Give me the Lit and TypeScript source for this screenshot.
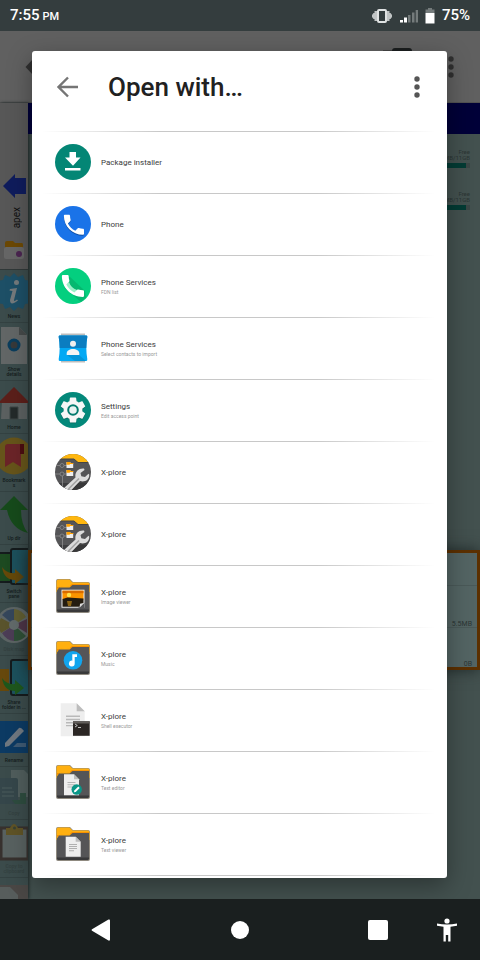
import { LitElement, html, css, svg, nothing } from "lit";
import type { SVGTemplateResult } from "lit";
import { customElement } from "lit/decorators.js";

const HANDSET =
  "M6.62 10.79c1.44 2.83 3.76 5.14 6.59 6.59l2.2-2.2c.27-.27.67-.36 1.02-.24 1.12.37 2.33.57 3.57.57.55 0 1 .45 1 1V20c0 .55-.45 1-1 1-9.39 0-17-7.61-17-17 0-.55.45-1 1-1h3.5c.55 0 1 .45 1 1 0 1.25.2 2.45.57 3.57.11.35.03.74-.25 1.02l-2.2 2.2z";
const GEAR =
  "M19.43 12.98c.04-.32.07-.64.07-.98s-.03-.66-.07-.98l2.11-1.65c.19-.15.24-.42.12-.64l-2-3.46c-.12-.22-.39-.3-.61-.22l-2.49 1c-.52-.4-1.08-.73-1.69-.98l-.38-2.65C14.46 2.18 14.25 2 14 2h-4c-.25 0-.46.18-.49.42l-.38 2.65c-.61.25-1.17.59-1.69.98l-2.49-1c-.23-.09-.49 0-.61.22l-2 3.46c-.13.22-.07.49.12.64l2.11 1.65c-.04.32-.07.65-.07.98s.03.66.07.98l-2.11 1.65c-.19.15-.24.42-.12.64l2 3.46c.12.22.39.3.61.22l2.49-1c.52.4 1.08.73 1.69.98l.38 2.65c.03.24.24.42.49.42h4c.25 0 .46-.18.49-.42l.38-2.65c.61-.25 1.17-.59 1.69-.98l2.49 1c.23.09.49 0 .61-.22l2-3.46c.12-.22.07-.49-.12-.64l-2.11-1.65z";

const folder = (inner: SVGTemplateResult) => svg`
  <path d="M3 1h12l3 3h15q2 0 2 2v27q0 2-2 2H3q-2 0-2-2V3q0-2 2-2z" fill="#8f8a80"/>
  <path d="M3.500 1.500h11l3 3h15.500q1.500 0 1.500 1.500v8h-33V3.500q0-2 2-2z" fill="#ffb010"/>
  <path d="M2 9V11l4-2.500h8l3-2.500h17V7z" fill="#f79000"/>
  <path d="M2 12.500L4 9.500h10.500L17.500 7H34v25q0 2-2 2H4q-2 0-2-2z" fill="#555557"/>
  <path d="M2 31.500h32v1q0 1.500-2 1.500H4q-2 0-2-1.500z" fill="#39393a"/>
  ${inner}`;

const sheet = (x: number, y: number, w: number, h: number, f: number) => svg`
  <path d="M${x} ${y}h${w - f}l${f} ${f}v${h - f}h${-w}z" fill="#eeeeee"/>
  <path d="M${x + w - f} ${y}l${f} ${f}h${-f}z" fill="#bdbdbd"/>`;

const xplore = svg`
  <clipPath id="disc"><circle cx="18" cy="18" r="18"/></clipPath>
  <g clip-path="url(#disc)">
    <rect width="36" height="36" fill="#555557"/>
    <path d="M0 0h36v8.500H23L19 5H0z" fill="#ffb70f"/>
    <path d="M0 5h19l4 3.500h13" fill="none" stroke="#444" stroke-width="1"/>
    <path d="M0 29h36v7H0z" fill="#3d3d3f"/>
    <g fill="none" stroke="#8d8d8d" stroke-width=".8"><path d="M0 11.500h12M0 20h12M7.500 22v12"/><circle cx="7" cy="11.500" r="2" fill="#555557"/><circle cx="7" cy="20" r="2" fill="#555557"/></g>
    <path d="M11.500 8h3.500l.8 1h2.400v5h-6.700z" fill="#eee"/><path d="M11.500 8h3.500l.8 1h2.400v1h-3l-.7.700h-3z" fill="#ffa000"/>
    <path d="M11.500 16h3.500l.8 1h2.400v5h-6.700z" fill="#eee"/><path d="M11.500 16h3.500l.8 1h2.400v1h-3l-.7.700h-3z" fill="#ffa000"/>
    <path d="M13 36L26 26l6 1 4-5v14z" fill="#333" opacity=".5"/>
    <path d="M9 34L20.500 23.500C19.500 18 23.500 13.800 29 14.500l.5 1.500-4 3 .8 3.200 3.700.8 3.500-3.300.7.800C34.500 25.500 30 28.500 25 27L15.500 37H10z" fill="#dcdcdc"/>
    <path d="M13.500 35L24 24.500" stroke="#a4a4a4" stroke-width="1.600" fill="none"/>
  </g>`;

const icons: Record<string, SVGTemplateResult> = {
  installer: svg`<circle cx="18" cy="18" r="18" fill="#048675"/>
    <path d="M14.500 8h6.500v5.500h4.500L18 21.700 10 13.500h4.500zM10 24h15.500v2.400H10z" fill="#fff"/>`,
  phone: svg`<circle cx="18" cy="18" r="18" fill="#1a73e8"/>
    <path d="${HANDSET}" transform="translate(5.500 6.200) scale(1.120)" fill="#0d4ea6"/>
    <path d="${HANDSET}" transform="translate(5.500 5.300) scale(1.120)" fill="#fff"/>`,
  services: svg`<circle cx="18" cy="18" r="18" fill="#04cf7f"/>
    <path d="M14.500 8.500L30 23l1 6.500L26 34 9.500 20z" fill="#05b870"/>
    <path d="M9 17l5-3q2 6 8 8l-2 5q-8-3-11-10z" fill="#9df0c9"/>
    <path d="${HANDSET}" transform="translate(3.200 3.200) scale(1.230)" fill="#fff"/>`,
  contacts: svg`<path d="M6 3.500h24v29H6z" fill="#bdbdbd"/>
    <path d="M4.500 5.500h27q1 0 .8 1.500c-1.300 7-1.300 15 0 22q.2 2-1 2H4.700q-1.200 0-1-2c1.300-7 1.300-15 0-22q-.2-1.500.8-1.500z" fill="#03a9f4"/>
    <path d="M4.500 5.500h27q1 0 .8 1.500-1 5-1 11H4.700q0-6-1-11-.2-1.500.8-1.500z" fill="#0b7dc0"/>
    <path d="M20 31l-8-6h12l7 6z" fill="#0395d8"/>
    <circle cx="18" cy="13.700" r="3" fill="#eee"/><path d="M11.700 25v-1.500c0-3 3-4.500 6.300-4.500s6.300 1.500 6.300 4.500V25z" fill="#f4f4f4"/>`,
  settings: svg`<circle cx="18" cy="18" r="18" fill="#04887a"/>
    <path d="${GEAR}" transform="translate(3 3.800) scale(1.250)" fill="#04665b"/>
    <path d="${GEAR}" transform="translate(3 3) scale(1.250)" fill="#f6f6f6"/>
    <circle cx="18" cy="18" r="4.800" fill="#eaf3f2" stroke="#047a6d" stroke-width="2"/>`,
  xplore,
  image: folder(svg`<rect x="6.500" y="11.700" width="23" height="18" fill="#eee"/>
    <rect x="7.500" y="12.700" width="21" height="9" fill="#fb9400"/><path d="M7.500 12.700h21v2.500h-21z" fill="#d86b00"/>
    <circle cx="14" cy="17" r="2.200" fill="#ffe24a"/>
    <path d="M7.500 21l5-1.500 16 1v8.200h-21z" fill="#241c10"/><path d="M12 23h5l-1 5h-3z" fill="#8c6414"/>
    <path d="M29.500 24.500v6h-7z" fill="#555557"/><path d="M24.500 29.700l.5-4 4.500-1z" fill="#ddd"/>`),
  music: folder(svg`<circle cx="18" cy="20.300" r="9.300" fill="#12a5ee"/>
    <path d="M17.300 14.300h4.700v2.700h-2.300v6.500a2.900 2.900 0 1 1-2.400-2.800z" fill="#fff"/>`),
  shell: svg`${sheet(5.7, 1.3, 24, 33, 8)}
    <path d="M11 13.500h14v1.500H11zM11 16.700h14v1.500H11zM11 20h8v1.500h-8zM11 23h8v1.200h-8z" fill="#b9b9b9"/>
    <rect x="18" y="19.300" width="16.700" height="14.500" fill="#2b2624"/><path d="M18 19.300h16.700v2.200H18z" fill="#625e5b"/>
    <path d="M20 22l2.300 1.500L20 25M23 25.500h3" stroke="#d0d0d0" fill="none" stroke-width=".9"/>`,
  editor: folder(svg`${sheet(9, 10.3, 15, 21, 5)}
    <path d="M12.500 18h8v1h-8zM12.500 20.300h8v1h-8zM12.500 22.600h5v1h-5z" fill="#b5b5b5"/>
    <circle cx="21.700" cy="25.500" r="5.200" fill="#0a9687"/><path d="M19 28.300l.3-1.700 4-4 1.400 1.400-4 4z" fill="#fff"/>`),
  viewer: folder(svg`${sheet(10.7, 10.7, 15, 20, 5)}
    <path d="M14 18h8v1h-8zM14 20h8v1h-8zM14 22h8v1h-8zM14 24.300h5v1h-5z" fill="#b0b0b0"/>`),
};

const apps = [
  { icon: "installer", name: "Package installer" },
  { icon: "phone", name: "Phone" },
  { icon: "services", name: "Phone Services", note: "FDN list" },
  { icon: "contacts", name: "Phone Services", note: "Select contacts to import" },
  { icon: "settings", name: "Settings", note: "Edit access point" },
  { icon: "xplore", name: "X-plore" },
  { icon: "xplore", name: "X-plore" },
  { icon: "image", name: "X-plore", note: "Image viewer" },
  { icon: "music", name: "X-plore", note: "Music" },
  { icon: "shell", name: "X-plore", note: "Shell executor" },
  { icon: "editor", name: "X-plore", note: "Text editor" },
  { icon: "viewer", name: "X-plore", note: "Text viewer" },
];

const tools: { label: string[]; faint?: boolean; art: SVGTemplateResult }[] = [
  {
    label: ["News"],
    art: svg`<path d="M14 0l4 4 5-2 2 5 6 1-1 6 4 5-4 5 1 6-6 1-2 5-5-2-4 4-4-4-5 2-2-5-6-1 1-6-4-5 4-5-1-6 6-1 2-5 5 2z" fill="#1d4f66"/>
      <circle cx="16.500" cy="9.500" r="2.500" fill="#747a7c"/><path d="M10 16l7-1-3 12q0 2 3-.5l1 1q-8 6-8-.5l2.500-9-3-.5z" fill="#747a7c"/>`,
  },
  {
    label: ["Show", "details"],
    art: svg`<path d="M1 1h18l8 8v29H1z" fill="#626666"/><path d="M19 1l8 8h-8z" fill="#454949"/>
      <circle cx="14" cy="19" r="5" fill="#37393a" stroke="#0b3d5c" stroke-width="3"/>`,
  },
  {
    label: ["Home"],
    art: svg`<path d="M2 16L14 6l13 10v19H1z" fill="#5b6060"/><path d="M10 23h8v12h-8z" fill="#232a2a" stroke="#3d4444"/>
      <path d="M14 3L30 19H-2z" fill="#5b1f1a"/>`,
  },
  {
    label: ["Bookmark", "s"],
    art: svg`<circle cx="14" cy="19" r="18.500" fill="#66541a"/><path d="M5 10q0-3 3-3h16v8h-3v15l-8-5-8 5z" fill="#6b2428"/><path d="M20 7h4v10h-4z" fill="#4b0d11"/>`,
  },
  { label: ["Up dir"], art: svg`<path d="M14 1L28 15h-7q0 15 7 23Q11 34 7 15H0z" fill="#164a1b"/>` },
  {
    label: ["Switch", "pane"],
    art: svg`<rect x="-6" y="5" width="17" height="29" fill="#1d4a21" stroke="#151b1d" stroke-width="2"/>
      <rect x="11" y="1" width="22" height="35" rx="2" fill="#1d525e" stroke="#151b1d" stroke-width="2"/>
      <path d="M2 19q5 7 13 6v-4l9 8-9 7v-4Q4 32 2 19z" fill="#66490a"/>`,
  },
  {
    label: ["Disk map"],
    faint: true,
    art: svg`<circle cx="14" cy="19" r="18" fill="#626969"/><path d="M14 19L2 9A16 16 0 0 1 14 3z" fill="#34465e"/><path d="M14 19V3a16 16 0 0 1 12 8z" fill="#67612e"/>
      <path d="M14 19l13-6v14z" fill="#4f3146"/><path d="M14 19l12 11a16 16 0 0 1-12 5z" fill="#2d5033"/><path d="M14 19v16a16 16 0 0 1-12-8z" fill="#503b58"/><path d="M14 19L1 27a16 16 0 0 1 0-15z" fill="#5f5527"/><circle cx="14" cy="19" r="5" fill="#697070"/>`,
  },
  {
    label: ["Share", "folder in ..."],
    art: svg`<path d="M0 10h9v22H0z" fill="#66480c"/><rect x="11" y="1" width="22" height="35" rx="2" fill="#1d525e" stroke="#151b1d" stroke-width="2"/>
      <path d="M2 19q5 7 13 6v-4l9 8-9 7v-4Q4 32 2 19z" fill="#1e571c"/>`,
  },
  {
    label: ["Rename"],
    art: svg`<rect y="4" width="28" height="32" fill="#0c3a63"/><path d="M5 30V26L19 11q2-1 5 3L9 29z" fill="#707880"/><path d="M17 26h9v4H13z" fill="#3f5a73"/>`,
  },
  {
    label: ["Copy"],
    faint: true,
    art: svg`<path d="M11 0h13l5 5v22H11z" fill="#546160"/><rect x="-3" y="8" width="21" height="26" rx="2" fill="#35464a"/><path d="M2 18h10M2 22h12M2 26h12" stroke="#4d5c5f" fill="none"/><path d="M12 30h8v-7h6v11H15z" fill="#2c4d3e"/>`,
  },
  {
    label: ["Copy to", "clipboard"],
    faint: true,
    art: svg`<rect x="1" y="5" width="27" height="31" fill="#5e6564" stroke="#372d29" stroke-width="3"/><path d="M6 12V5h4q4-8 8 0h5v7z" fill="#665520"/><circle cx="14.500" cy="5" r="1.500" fill="#38402f"/>`,
  },
  {
    label: [],
    faint: true,
    art: svg`<rect x="-1" y="4" width="30" height="36" fill="#4d4744"/><path d="M0 6h10l8 8v24H0z" fill="#5c6160"/>`,
  },
];

const dots = svg`<circle cx="12" cy="4" r="2.700"/><circle cx="12" cy="12" r="2.700"/><circle cx="12" cy="20" r="2.700"/>`;

@customElement("app-root")
export class AppRoot extends LitElement {
  static styles = css`
    :host {
      display: flex;
      flex-direction: column;
      height: 100vh;
      font-family: Roboto, "Liberation Sans", sans-serif;
      background: #43514f;
      overflow: hidden;
    }
    * { box-sizing: border-box; }
    button {
      border: 0;
      padding: 0;
      margin: 0;
      background: none;
      font: inherit;
      color: inherit;
      display: flex;
      align-items: center;
      justify-content: center;
    }
    svg { display: block; flex: none; }
    ul { list-style: none; margin: 0; padding: 0; }

    .status {
      flex: none;
      height: 31px;
      padding: 0 10px;
      display: flex;
      align-items: center;
      justify-content: space-between;
      background: #343d3e;
      color: #fff;
      font-size: 15px;
      font-weight: 500;
      line-height: 31px;
    }
    .clock { display: flex; align-items: baseline; gap: 3px; }
    .clock small { font-size: 11px; }
    .signals { display: flex; align-items: center; gap: 7px; }

    .stage {
      flex: 1;
      min-height: 0;
      position: relative;
      display: flex;
      flex-direction: column;
      overflow: hidden;
    }
    .toolbar {
      flex: none;
      height: 72px;
      display: flex;
      align-items: center;
      gap: 26px;
      padding: 0 17px 0 24px;
      background: #606060;
      border-bottom: 1px solid #525252;
      fill: #303030;
    }
    .toolbar .device { margin-left: auto; align-self: flex-start; margin-top: 17px; }
    .toolbar button { width: 24px; height: 24px; }
    .panes { flex: 1; min-height: 0; display: flex; }
    .side {
      flex: none;
      width: 28px;
      overflow: hidden;
      background: #3b4b4b;
      box-shadow: 1px 0 3px #1e2828;
    }
    .tab {
      height: 167px;
      padding-bottom: 10px;
      display: flex;
      flex-direction: column;
      align-items: center;
      justify-content: flex-end;
      gap: 9px;
      background: #575757;
      border-bottom: 1px solid #303838;
      font-size: 10px;
      color: #101010;
    }
    .tab span { writing-mode: vertical-rl; transform: rotate(180deg); line-height: 12px; margin: 0 0 4px 6px; }
    .tool {
      width: 28px;
      padding: 3px 0;
      flex-direction: column;
      gap: 3px;
      font-size: 5px;
      line-height: 5px;
      font-weight: 500;
      color: #141c1c;
      border-bottom: 1px solid #334141;
    }
    .tool svg { overflow: hidden; }
    .tool span { display: block; height: 5px; white-space: nowrap; }
    .faint { color: #33403f; }
    .faint svg { opacity: 0.85; }

    .files { flex: 1; min-width: 0; color: #2b3534; font-size: 6px; text-align: right; }
    .path { height: 31px; background: #000038; margin-bottom: 15px; }
    .volume { height: 42px; padding: 0 10px; line-height: 6px; }
    .volume p { margin: 0; }
    .track { height: 5px; margin-top: 2px; background: #3a4645; }
    .fill { height: 5px; background: #033b34; }
    .chosen {
      margin-top: 317px;
      height: 120px;
      border: 3px solid #5c3000;
      background: #536463;
      box-shadow: 0 0 14px #202a2a;
      font-size: 7px;
      line-height: 6px;
    }
    .chosen li {
      height: 42px;
      padding: 0 5px;
      display: flex;
      align-items: flex-end;
      justify-content: flex-end;
      border-bottom: 1px solid #4a5958;
    }
    .chosen li:first-child { height: 33px; }
    .chosen li:last-child { height: 39px; border-bottom: 0; }

    .dialog {
      position: absolute;
      inset: 20px 33px 21px 32px;
      display: flex;
      flex-direction: column;
      overflow: hidden;
      background: #fff;
      border-radius: 3px;
      box-shadow: 0 8px 24px rgba(0, 0, 0, 0.35);
    }
    .head {
      flex: none;
      height: 80px;
      padding: 0 18px 8px 24px;
      display: flex;
      align-items: center;
    }
    .head h1 { flex: 1; margin: 0 0 0 28px; font-size: 26px; line-height: 32px; font-weight: 500; color: #212121; }
    .head button { width: 24px; height: 24px; fill: #555; }
    .list { flex: 1; min-height: 0; overflow: hidden; }
    .list li::before, .list::after {
      content: "";
      display: block;
      height: 1px;
      margin: 0 12px 0 10px;
      background: linear-gradient(90deg, #fff, #c8c8c8 30%, #c8c8c8 70%, #fff);
    }
    .app { width: 100%; height: 61px; padding: 0 23px; gap: 10px; justify-content: flex-start; text-align: left; }
    .app svg { margin-bottom: 1px; }
    .name { display: block; font-size: 8px; line-height: 10px; color: #3c3c3c; }
    .note { display: block; font-size: 5px; line-height: 8px; color: #999; }

    .nav {
      flex: none;
      height: 61px;
      padding: 0 9px 0 77px;
      display: flex;
      align-items: center;
      gap: 21px;
      background: #1a1f1f;
    }
    .keys { flex: 1; display: flex; justify-content: space-between; }
    .nav button { width: 48px; height: 48px; fill: #fff; }
  `;

  render() {
    return html`
      <header class="status">
        <span class="clock">7:55<small>PM</small></span>
        <span class="signals">
          <svg width="22" height="16" viewBox="0 0 22 16">
            <path d="M1 7l1.500-2h1V3H6v10H3.500v-2h-1L1 9zM21 7l-1.500-2h-1V3H16v10h2.500v-2h1L21 9z" fill="#c0c4c4" />
            <rect x="7" y="2" width="8" height="12" rx="1" fill="none" stroke="#dfe2e2" stroke-width="2" />
          </svg>
          <svg width="18" height="14" viewBox="0 0 18 14">
            <path d="M0 11h3v2.500H0zM4 8.500h3v5H4z" fill="#fff" /><path d="M8 6h2.500v7.500H8zM12 3.500h2.500v10H12zM15.700 1H18v12.500h-2.300z" fill="#747b7b" />
          </svg>
          <svg width="10" height="16" viewBox="0 0 10 16">
            <path d="M3 0h4v1.500h2.500V5h-9V1.500H3z" fill="#747b7b" /><path d="M.5 5h9v10.500h-9z" fill="#fff" />
          </svg>
          <span>75%</span>
        </span>
      </header>

      <div class="stage">
        <div class="toolbar">
          <button aria-label="Up"><svg width="24" height="24" viewBox="0 0 24 24"><path d="M1.500 12L9 4l3 3-3 3h13v4H9l3 3-3 3z" /></svg></button>
          <svg class="device" width="30" height="24" viewBox="0 0 30 24"><rect x="0" y="2" width="20" height="20" fill="#454545" /><rect x="9" y="0" width="20" height="24" rx="3" fill="#1b1e1f" /><rect x="11" y="3" width="16" height="18" fill="#1f3c44" /></svg>
          <button aria-label="More"><svg width="24" height="24" viewBox="0 0 24 24">${dots}</svg></button>
        </div>
        <div class="panes">
          <aside class="side">
            <div class="tab">
              <svg width="24" height="24" viewBox="0 0 24 24"><path d="M1 12L13 0v4h11v16H13v4z" fill="#0f1c5c" /></svg>
              <span>apex</span>
              <svg width="20" height="18" viewBox="0 0 20 18"><path d="M1 2q0-2 2-2h6l2 2h7q1 0 1 2v4H1z" fill="#6b4805" /><rect x="0" y="6" width="20" height="12" rx="2" fill="#666" /><circle cx="15" cy="13" r="3" fill="#4a2450" /></svg>
            </div>
            ${tools.map(
              (t) => html`<button class="tool ${t.faint ? "faint" : ""}">
                <svg width="28" height="38" viewBox="0 0 28 38">${t.art}</svg>
                <div>${t.label.map((l) => html`<span>${l}</span>`)}</div>
              </button>`,
            )}
          </aside>
          <main class="files">
            <div class="path"></div>
            ${["960MB/11GB", "937MB/11GB"].map(
              (v) => html`<div class="volume"><p>Free</p><p>${v}</p><div class="track"><div class="fill" style="width:99%"></div></div></div>`,
            )}
            <ul class="chosen"><li></li><li>5.5MB</li><li>0B</li></ul>
          </main>
        </div>

        <section class="dialog" role="dialog" aria-labelledby="title">
          <header class="head">
            <button aria-label="Back"><svg width="24" height="24" viewBox="0 0 24 24"><path d="M12 2.500L2.500 12 12 21.500M3 12h19" fill="none" stroke="#757575" stroke-width="2.400" /></svg></button>
            <h1 id="title">Open with…</h1>
            <button aria-label="Options"><svg width="24" height="24" viewBox="0 0 24 24">${dots}</svg></button>
          </header>
          <ul class="list">
            ${apps.map(
              (a) => html`<li><button class="app">
                <svg width="36" height="36" viewBox="0 0 36 36">${icons[a.icon]}</svg>
                <span><span class="name">${a.name}</span>${a.note ? html`<span class="note">${a.note}</span>` : nothing}</span>
              </button></li>`,
            )}
          </ul>
        </section>
      </div>

      <nav class="nav">
        <div class="keys">
          <button aria-label="Back"><svg width="20" height="22" viewBox="0 0 20 22"><path d="M1 10.300Q0 11 1 11.700L17.500 21.500Q19 22 19 20.500v-19Q19 0 17.500.500z" /></svg></button>
          <button aria-label="Home"><svg width="18" height="18" viewBox="0 0 18 18"><circle cx="9" cy="9" r="9" /></svg></button>
          <button aria-label="Recents"><svg width="20" height="20" viewBox="0 0 20 20"><rect width="20" height="20" rx="2" /></svg></button>
        </div>
        <button aria-label="Accessibility"><svg width="22" height="24" viewBox="0 0 22 24"><circle cx="11" cy="3" r="2.600" /><path d="M1 5.500q10 2 20 0v2.300l-6.500 1V23.500h-2.300V17H9.800v6.500H7.500V8.800L1 7.800z" /></svg></button>
      </nav>
    `;
  }
}
